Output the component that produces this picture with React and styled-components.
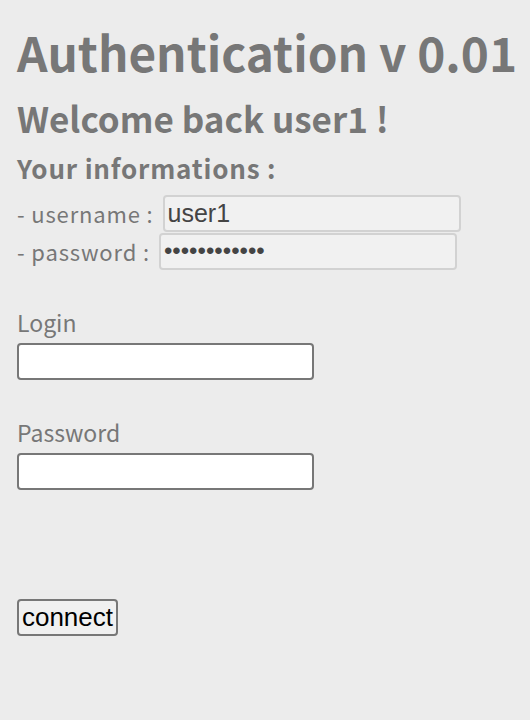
import React from "react";
import styled, { createGlobalStyle } from "styled-components";

const Global = createGlobalStyle`
  html, body { margin: 0; padding: 0; background: #ececec; }
  body { font-family: "Noto Sans CJK KR", "Noto Sans", sans-serif; color: #777; }
`;

const Page = styled.div`
  padding: 24px 17px 20px;
  display: flex;
  flex-direction: column;
`;

const Title = styled.h1`
  margin: 0;
  font-size: 47.7px;
  line-height: 56px;
  font-weight: 700;
  white-space: nowrap;
`;

const Subtitle = styled.h2`
  margin: 16px 0 0;
  font-size: 35px;
  line-height: 44px;
  font-weight: 700;
`;

const Section = styled.h3`
  margin: 12px 0 0;
  font-size: 26px;
  letter-spacing: 0.8px;
  line-height: 32px;
  font-weight: 700;
`;

const InfoList = styled.div`
  margin-top: 10px;
  display: flex;
  flex-direction: column;
`;

const InfoRow = styled.div`
  display: flex;
  align-items: center;
  gap: 9px;
  font-size: 22px;
  letter-spacing: 0.85px;
  height: 38px;
`;

const InfoInput = styled.input`
  box-sizing: border-box;
  width: 298px;
  height: 37px;
  background: #f1f1f1;
  border: 2px solid #d2d2d2;
  border-radius: 4px;
  font-family: "Liberation Sans", Arial, sans-serif;
  font-size: ${(p) => (p.type === "password" ? 24 : 25)}px;
  letter-spacing: 0;
  color: #444;
  padding: 0 3px;
  outline: none;
`;

const Field = styled.div`
  display: flex;
  flex-direction: column;
  gap: 7px;
  margin-top: 38px;
`;

const Label = styled.label`
  font-size: 23px;
  line-height: 28px;
`;

const TextInput = styled.input`
  box-sizing: border-box;
  width: 297px;
  height: 37px;
  background: #fff;
  border: 2px solid #777;
  border-radius: 4px;
  outline: none;
`;

const Button = styled.button`
  align-self: flex-start;
  margin-top: 109px;
  box-sizing: border-box;
  width: 101px;
  height: 37px;
  padding: 0;
  background: #f0f0f0;
  border: 2px solid #777;
  border-radius: 4px;
  font-family: "Liberation Sans", Arial, sans-serif;
  font-size: 26px;
  color: #000;
`;

export default function App() {
  return (
    <>
      <Global />
      <Page>
        <Title>Authentication v 0.01</Title>
        <Subtitle>Welcome back user1 !</Subtitle>
        <Section>Your informations :</Section>
        <InfoList>
          <InfoRow>
            - username : <InfoInput defaultValue="user1" />
          </InfoRow>
          <InfoRow>
            - password : <InfoInput type="password" defaultValue="password1234" />
          </InfoRow>
        </InfoList>
        <Field>
          <Label>Login</Label>
          <TextInput />
        </Field>
        <Field>
          <Label>Password</Label>
          <TextInput type="password" />
        </Field>
        <Button>connect</Button>
      </Page>
    </>
  );
}
